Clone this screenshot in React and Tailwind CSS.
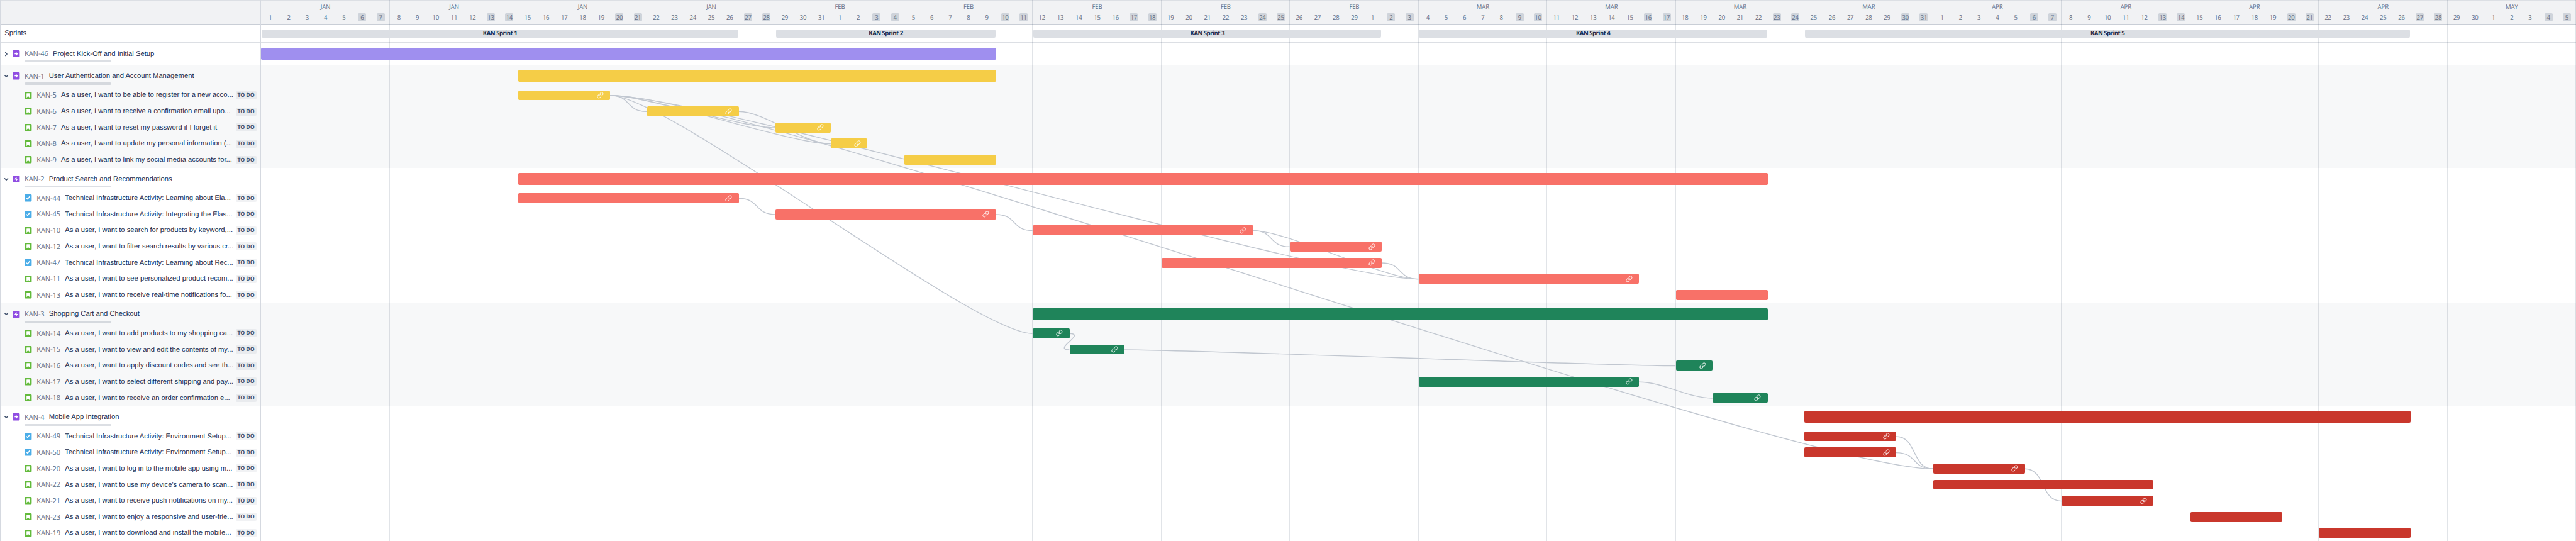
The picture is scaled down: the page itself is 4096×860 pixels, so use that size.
import { Link } from "lucide-react";

const DAY = 29.212;
const EPIC_H = 35.3;
const ITEM_H = 25.67;

const MONTHS = [
  "JAN", "JAN", "JAN", "JAN", "FEB", "FEB", "FEB", "FEB", "FEB",
  "MAR", "MAR", "MAR", "MAR", "APR", "APR", "APR", "APR", "MAY",
];
const MONTH_LENGTHS = [31, 29, 31, 30, 5];
const DATES = MONTH_LENGTHS.flatMap((n) => Array.from({ length: n }, (_, i) => i + 1));

const SPRINTS = [
  { name: "KAN Sprint 1", start: 0, days: 26 },
  { name: "KAN Sprint 2", start: 28, days: 12 },
  { name: "KAN Sprint 3", start: 42, days: 19 },
  { name: "KAN Sprint 4", start: 63, days: 19 },
  { name: "KAN Sprint 5", start: 84, days: 33 },
];

const EPICS = [
  { id: 46, title: "Project Kick-Off and Initial Setup", color: "bg-[#9f8fef]", start: 0, days: 40, items: [] },
  {
    id: 1, title: "User Authentication and Account Management", color: "bg-[#f5cd47]", start: 14, days: 26, shaded: true,
    items: [
      { id: 5, type: "story", title: "As a user, I want to be able to register for a new acco...", start: 14, days: 5, link: true },
      { id: 6, type: "story", title: "As a user, I want to receive a confirmation email upo...", start: 21, days: 5, link: true },
      { id: 7, type: "story", title: "As a user, I want to reset my password if I forget it", start: 28, days: 3, link: true },
      { id: 8, type: "story", title: "As a user, I want to update my personal information (...", start: 31, days: 2, link: true },
      { id: 9, type: "story", title: "As a user, I want to link my social media accounts for...", start: 35, days: 5 },
    ],
  },
  {
    id: 2, title: "Product Search and Recommendations", color: "bg-[#f87168]", start: 14, days: 68,
    items: [
      { id: 44, type: "task", title: "Technical Infrastructure Activity: Learning about Ela...", start: 14, days: 12, link: true },
      { id: 45, type: "task", title: "Technical Infrastructure Activity: Integrating the Elas...", start: 28, days: 12, link: true },
      { id: 10, type: "story", title: "As a user, I want to search for products by keyword,...", start: 42, days: 12, link: true },
      { id: 12, type: "story", title: "As a user, I want to filter search results by various cr...", start: 56, days: 5, link: true },
      { id: 47, type: "task", title: "Technical Infrastructure Activity: Learning about Rec...", start: 49, days: 12, link: true },
      { id: 11, type: "story", title: "As a user, I want to see personalized product recom...", start: 63, days: 12, link: true },
      { id: 13, type: "story", title: "As a user, I want to receive real-time notifications fo...", start: 77, days: 5 },
    ],
  },
  {
    id: 3, title: "Shopping Cart and Checkout", color: "bg-[#1f845a]", start: 42, days: 40, shaded: true,
    items: [
      { id: 14, type: "story", title: "As a user, I want to add products to my shopping ca...", start: 42, days: 2, link: true },
      { id: 15, type: "story", title: "As a user, I want to view and edit the contents of my...", start: 44, days: 3, link: true },
      { id: 16, type: "story", title: "As a user, I want to apply discount codes and see th...", start: 77, days: 2, link: true },
      { id: 17, type: "story", title: "As a user, I want to select different shipping and pay...", start: 63, days: 12, link: true },
      { id: 18, type: "story", title: "As a user, I want to receive an order confirmation e...", start: 79, days: 3, link: true },
    ],
  },
  {
    id: 4, title: "Mobile App Integration", color: "bg-[#c9372c]", start: 84, days: 33,
    items: [
      { id: 49, type: "task", title: "Technical Infrastructure Activity: Environment Setup...", start: 84, days: 5, link: true },
      { id: 50, type: "task", title: "Technical Infrastructure Activity: Environment Setup...", start: 84, days: 5, link: true },
      { id: 20, type: "story", title: "As a user, I want to log in to the mobile app using m...", start: 91, days: 5, link: true },
      { id: 22, type: "story", title: "As a user, I want to use my device's camera to scan...", start: 91, days: 12 },
      { id: 21, type: "story", title: "As a user, I want to receive push notifications on my...", start: 98, days: 5, link: true },
      { id: 23, type: "story", title: "As a user, I want to enjoy a responsive and user-frie...", start: 105, days: 5 },
      { id: 19, type: "story", title: "As a user, I want to download and install the mobile...", start: 112, days: 5 },
    ],
  },
];

const DEPENDENCIES = [
  [5, 6], [5, 7], [5, 8], [6, 8], [5, 14], [5, 11], [5, 20],
  [44, 45], [45, 10], [10, 12], [10, 11], [47, 11],
  [14, 15], [15, 16], [17, 18],
  [49, 20], [50, 20], [20, 21],
];

// Left edge, right edge and vertical centre of every item bar.
const ANCHORS = {};
let cursor = 0;
for (const epic of EPICS) {
  cursor += EPIC_H;
  for (const item of epic.items) {
    ANCHORS[item.id] = {
      x1: item.start * DAY,
      x2: (item.start + item.days) * DAY,
      y: cursor + ITEM_H / 2 + 0.2,
    };
    cursor += ITEM_H;
  }
}

function connector([from, to]) {
  const a = ANCHORS[from];
  const b = ANCHORS[to];
  const h = 28.2 + 0.0975 * (b.x1 - a.x2);
  return `M${a.x2} ${a.y}C${a.x2 + h} ${a.y} ${b.x1 - h} ${b.y} ${b.x1} ${b.y}`;
}

function EpicIcon() {
  return (
    <svg viewBox="0 0 16 16" className="size-[11.4px] shrink-0">
      <rect width="16" height="16" rx="2" fill="#904ee2" />
      <path d="M9 2.8 4.3 8.2c-.2.3 0 .7.4.7h2.6v4.3l4.5-5.4c.2-.3 0-.7-.4-.7H9z" fill="#fff" />
    </svg>
  );
}

function TypeIcon({ type }) {
  return (
    <svg viewBox="0 0 16 16" className="size-[11.4px] shrink-0">
      <rect width="16" height="16" rx="2" fill={type === "task" ? "#4bade8" : "#63ba3c"} />
      {type === "task" ? (
        <path d="M4.9 8.5 7 10.8l4.2-5.9" fill="none" stroke="#fff" strokeWidth="2" strokeLinecap="round" strokeLinejoin="round" />
      ) : (
        <path d="M5.2 3.2h5.6c.4 0 .7.3.7.7v9L8 9.5l-3.5 3.4v-9c0-.4.3-.7.7-.7z" fill="#fff" />
      )}
    </svg>
  );
}

function Chevron({ open }) {
  return (
    <svg viewBox="0 0 10 10" className="size-[8px] shrink-0">
      <path
        d={open ? "M1.9 3.4 5 6.4l3.1-3" : "M3.4 1.9l3 3.1-3 3.1"}
        fill="none" stroke="#44546f" strokeWidth="1.9" strokeLinecap="round" strokeLinejoin="round"
      />
    </svg>
  );
}

function Key({ id }) {
  return (
    <span className={`${id > 9 ? "w-[45px]" : "w-[38.8px]"} shrink-0 pt-[2.4px] font-['Open_Sans',sans-serif] text-[11.2px] tracking-[-0.14px] text-[#626f86]`}>
      KAN-{id}
    </span>
  );
}

function EpicRow({ epic }) {
  return (
    <div className="relative flex h-[35.3px] items-center pl-[4.7px]">
      <Chevron open={epic.items.length > 0} />
      <span className="ml-[6.5px] flex"><EpicIcon /></span>
      <span className="ml-[7.4px] flex items-center">
        <Key id={epic.id} />
        <span className="pt-px">{epic.title}</span>
      </span>
      <span className="absolute left-[37.6px] top-[28.2px] h-[3.2px] w-[138px] rounded-full bg-[#091e42]/14" />
    </div>
  );
}

function ItemRow({ item }) {
  return (
    <div className="flex h-[25.67px] items-center pl-[38.3px] pr-[6.8px]">
      <TypeIcon type={item.type} />
      <span className="ml-[7.5px] flex flex-1 items-center">
        <Key id={item.id} />
        <span className="pt-px">{item.title}</span>
      </span>
      <span className="flex h-[13px] w-[33px] items-center justify-center rounded-[2px] bg-[#091e42]/6 pt-[0.4px] font-['Open_Sans',sans-serif] text-[8.8px] font-bold tracking-[-0.15px] text-[#44546f]">
        TO DO
      </span>
    </div>
  );
}

function Track({ bar, color, tall }) {
  return (
    <div className={`grid grid-cols-[repeat(126,minmax(0,1fr))] items-center ${tall ? "h-[35.3px]" : "h-[25.67px]"}`}>
      <div
        className={`relative z-10 flex items-center justify-end rounded-[2px] pr-[10.6px] ${color} ${tall ? "h-[19px]" : "h-[15.8px]"}`}
        style={{ gridColumn: `${bar.start + 1} / span ${bar.days}` }}
      >
        {bar.link && <Link className="size-[10.8px] text-white/80" strokeWidth={2.4} />}
      </div>
    </div>
  );
}

export default function App() {
  return (
    <div className="flex h-[860px] w-[4096px] overflow-hidden whitespace-nowrap bg-white font-['Liberation_Sans',Arial,sans-serif] text-[11.23px] text-[#172b4d] [text-rendering:geometricPrecision]">
      <aside className="flex w-[415.3px] shrink-0 flex-col border-x border-[#d5d9e0]">
        <div className="h-[39.1px] shrink-0 border-y border-t-[#dcdfe4] border-b-[#c9ced6] bg-[#f1f2f4]" />
        <div className="flex h-[28.9px] shrink-0 items-center border-b border-[#dcdfe4] pl-[6.3px] pt-[1.4px]">Sprints</div>
        {EPICS.map((epic) => (
          <section key={epic.id} className={epic.shaded ? "bg-[#f7f8f9]" : ""}>
            <EpicRow epic={epic} />
            {epic.items.map((item) => <ItemRow key={item.id} item={item} />)}
          </section>
        ))}
      </aside>

      <main className="relative flex flex-1 flex-col">
        <header className="flex h-[39.1px] shrink-0 flex-col border-y border-t-[#dcdfe4] border-b-[#c9ced6] bg-[#f1f2f4] font-['Open_Sans',sans-serif] text-[9.6px] text-[#626f86]">
          <div className="grid h-[20.2px] grid-cols-[repeat(18,minmax(0,1fr))] pt-[3.4px] text-center leading-[13px] tracking-[-0.15px]">
            {MONTHS.map((m, i) => <span key={i}>{m}</span>)}
          </div>
          <div className="grid grid-cols-[repeat(126,minmax(0,1fr))] justify-items-center tracking-[-0.3px]">
            {DATES.map((d, i) => (
              <span
                key={i}
                className={`flex h-[13px] w-[13px] items-center justify-center rounded-[2px] ${i % 7 > 4 ? "bg-[#cfd4db]" : ""}`}
              >
                {d}
              </span>
            ))}
          </div>
        </header>

        <div className="grid h-[28.9px] shrink-0 grid-cols-[repeat(126,minmax(0,1fr))] items-center border-b border-[#dcdfe4]">
          {SPRINTS.map((s) => (
            <div
              key={s.name}
              className="relative z-10 mx-[0.8px] flex h-[13px] items-center justify-center rounded-[2px] bg-[#dcdfe4] font-['Open_Sans',sans-serif] text-[9.6px] font-bold tracking-[-0.5px]"
              style={{ gridColumn: `${s.start + 1} / span ${s.days}` }}
            >
              {s.name}
            </div>
          ))}
        </div>

        <div className="relative flex-1">
          {EPICS.map((epic) => (
            <section key={epic.id} className={epic.shaded ? "bg-[#f7f8f9]" : ""}>
              <Track bar={epic} color={epic.color} tall />
              {epic.items.map((item) => <Track key={item.id} bar={item} color={epic.color} />)}
            </section>
          ))}
          <svg className="pointer-events-none absolute left-0 top-0 z-[5] h-full w-full" fill="none" stroke="#c1c7d0" strokeWidth="1.4">
            {DEPENDENCIES.map((d) => <path key={d.join("-")} d={connector(d)} />)}
          </svg>
        </div>

        <div className="pointer-events-none absolute inset-0 grid grid-cols-[repeat(18,minmax(0,1fr))]">
          {MONTHS.map((_, i) => <span key={i} className="border-r border-[#091e42]/12" />)}
        </div>
      </main>
    </div>
  );
}
